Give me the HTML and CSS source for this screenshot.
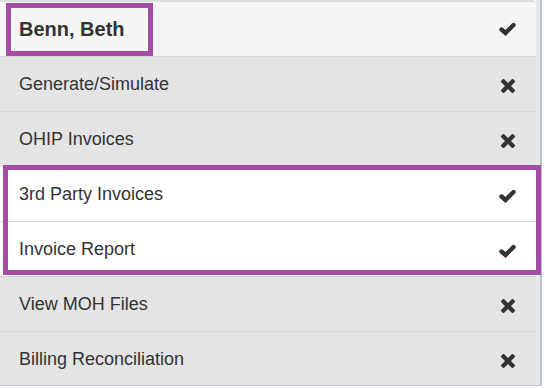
FILE: index.html
```html
<!DOCTYPE html>
<html>
<head>
<meta charset="utf-8">
<link rel="stylesheet" href="styles.css">
</head>
<body>
<div class="page">
  <div class="panel">
    <div class="row head">
      <span class="label name">Benn, Beth</span>
      <svg class="icon ok" viewBox="0 0 17 14" width="17" height="14"><polyline points="2.5,7.5 6.5,11 14.5,3" /></svg>
    </div>
    <div class="row off">
      <span class="label">Generate/Simulate</span>
      <svg class="icon no" viewBox="0 0 14 14" width="14" height="14"><path d="M2.5 2.5 L11.5 11.5 M11.5 2.5 L2.5 11.5" /></svg>
    </div>
    <div class="row off">
      <span class="label">OHIP Invoices</span>
      <svg class="icon no" viewBox="0 0 14 14" width="14" height="14"><path d="M2.5 2.5 L11.5 11.5 M11.5 2.5 L2.5 11.5" /></svg>
    </div>
    <div class="row on">
      <span class="label">3rd Party Invoices</span>
      <svg class="icon ok" viewBox="0 0 17 14" width="17" height="14"><polyline points="2.5,7.5 6.5,11 14.5,3" /></svg>
    </div>
    <div class="row on">
      <span class="label">Invoice Report</span>
      <svg class="icon ok" viewBox="0 0 17 14" width="17" height="14"><polyline points="2.5,7.5 6.5,11 14.5,3" /></svg>
    </div>
    <div class="row off">
      <span class="label">View MOH Files</span>
      <svg class="icon no" viewBox="0 0 14 14" width="14" height="14"><path d="M2.5 2.5 L11.5 11.5 M11.5 2.5 L2.5 11.5" /></svg>
    </div>
    <div class="row off">
      <span class="label">Billing Reconciliation</span>
      <svg class="icon no" viewBox="0 0 14 14" width="14" height="14"><path d="M2.5 2.5 L11.5 11.5 M11.5 2.5 L2.5 11.5" /></svg>
    </div>
  </div>
  <div class="gutter"></div>
  <div class="hl hl-name"></div>
  <div class="hl hl-rows"></div>
</div>
</body>
</html>
```

FILE: styles.css
```css
html, body {
  margin: 0;
  padding: 0;
  background: #ffffff;
}

.page {
  position: relative;
  display: flex;
  width: 545px;
  height: 388px;
  overflow: hidden;
  font-family: "Liberation Sans", Arial, sans-serif;
  color: #333333;
}

.panel {
  width: 536px;
  height: 386px;
  border-top: 2px solid #dedede;
  border-top-right-radius: 4px;
  border-bottom: 1px solid #b9c3d2;
  background: #e4e4e4;
  overflow: hidden;
  box-sizing: border-box;
}

.gutter {
  width: 6px;
  height: 386px;
  background: #e9e9e9;
  border-right: 2px solid #b9c3d2;
  border-bottom: 1px solid #b9c3d2;
  box-sizing: border-box;
}

.row {
  display: flex;
  align-items: center;
  justify-content: space-between;
  height: 55px;
  padding: 0 20px 0 19px;
  border-top: 1px solid #d9d9d9;
  box-sizing: border-box;
  font-size: 18px;
}

.row.head {
  height: 54px;
  border-top: none;
  background: #f5f5f5;
  font-size: 20px;
  font-weight: bold;
}

.row.off {
  background: #e4e4e4;
}

.row.on {
  background: #ffffff;
  border-top-color: #dddddd;
}

.row.on + .row.off {
  border-top-color: #cfcfcf;
}

.label {
  line-height: 1;
}

.icon {
  display: block;
  fill: none;
  stroke: #333333;
}

.icon.ok {
  stroke-width: 4.4;
  stroke-linecap: round;
  stroke-linejoin: miter;
}

.row .icon.ok {
  margin-top: 3px;
}

.row.head .icon.ok {
  margin-top: 0;
}

.icon.no {
  stroke-width: 4.2;
  stroke-linecap: square;
  margin-top: 3px;
  margin-right: 1px;
}

.hl {
  position: absolute;
  border: 5px solid #a54ca5;
  box-sizing: border-box;
  pointer-events: none;
}

.hl-name {
  left: 6px;
  top: 3px;
  width: 147px;
  height: 53px;
}

.hl-rows {
  left: 3px;
  top: 165px;
  width: 538px;
  height: 110px;
}
```
